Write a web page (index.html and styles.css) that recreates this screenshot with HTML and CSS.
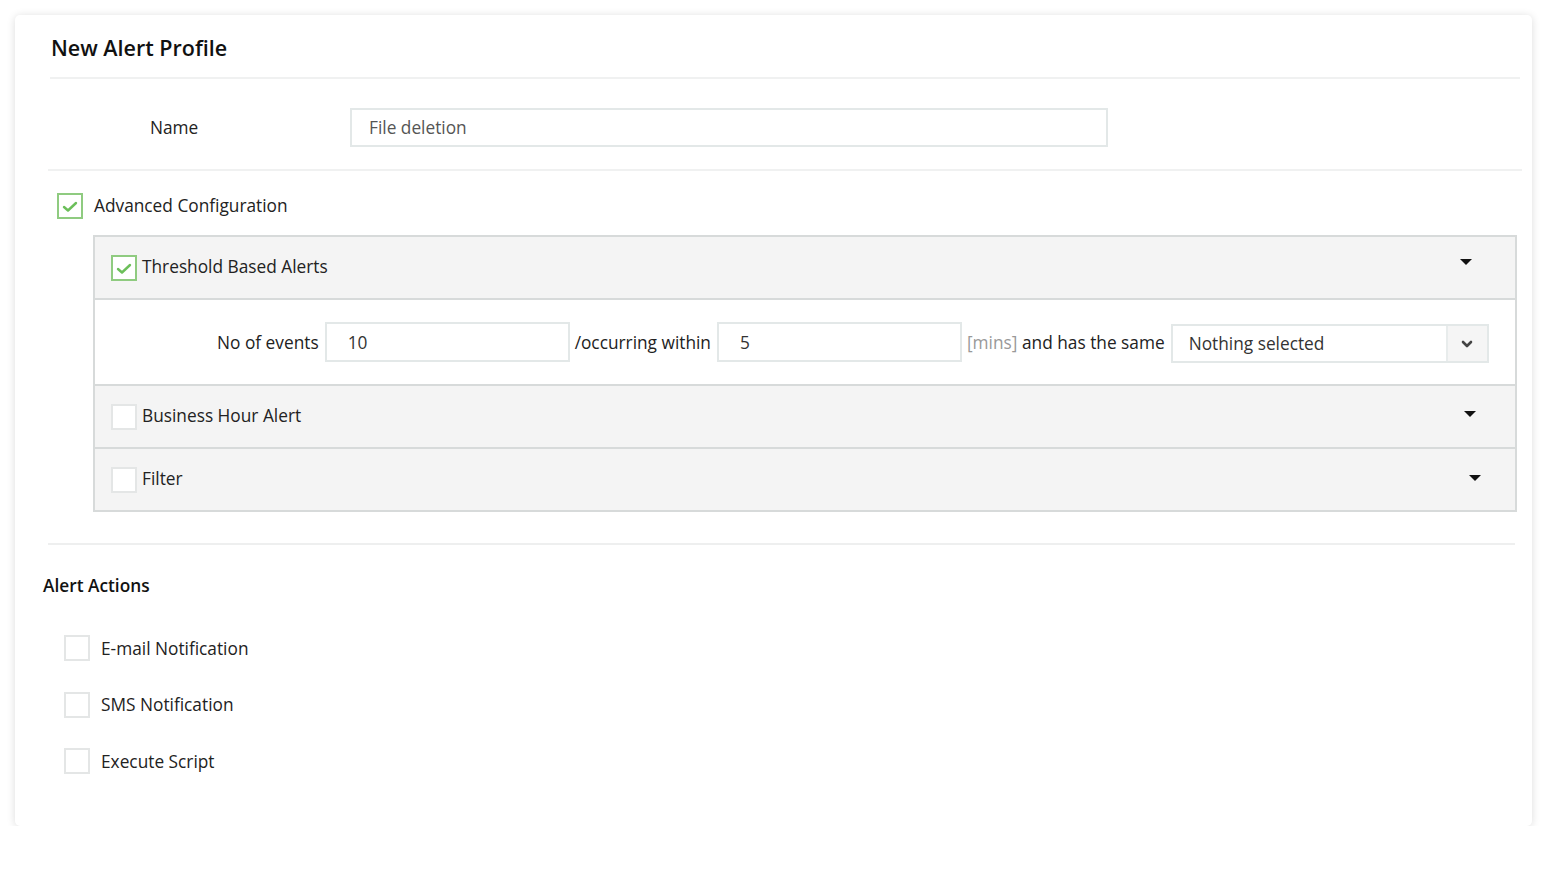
FILE: index.html
```html
<!DOCTYPE html>
<html lang="en">
<head>
<meta charset="utf-8">
<title>New Alert Profile</title>
<link rel="stylesheet" href="styles.css">
</head>
<body>
<div class="card">
  <div class="card-head">
    <h1 class="title">New Alert Profile</h1>
  </div>

  <div class="name-row">
    <label class="name-label">Name</label>
    <div class="text-input name-input">File deletion</div>
  </div>

  <div class="adv-row">
    <span class="cb cb-checked"><svg viewBox="0 0 22 22" width="22" height="22"><path d="M5 12 L9 15.5 L17 8" fill="none" stroke="#6cbf5a" stroke-width="2.4" stroke-linecap="round" stroke-linejoin="round"/></svg></span>
    <span class="adv-label">Advanced Configuration</span>
  </div>

  <div class="panel">
    <div class="panel-head">
      <span class="cb cb-checked"><svg viewBox="0 0 22 22" width="22" height="22"><path d="M5 12 L9 15.5 L17 8" fill="none" stroke="#6cbf5a" stroke-width="2.4" stroke-linecap="round" stroke-linejoin="round"/></svg></span>
      <span class="panel-title">Threshold Based Alerts</span>
      <span class="caret caret-1"></span>
    </div>
    <div class="panel-body">
      <span class="lbl">No of events</span>
      <div class="text-input small-input">10</div>
      <span class="lbl">/occurring within</span>
      <div class="text-input small-input">5</div>
      <span class="lbl"><span class="muted">[mins]</span> and has the same</span>
      <div class="select">
        <span class="select-text">Nothing selected</span>
        <span class="select-btn"><svg viewBox="0 0 14 10" width="14" height="10"><path d="M3 3 L7 7 L11 3" fill="none" stroke="#444" stroke-width="2.6" stroke-linecap="round" stroke-linejoin="round"/></svg></span>
      </div>
    </div>
    <div class="panel-head panel-head-sep">
      <span class="cb"></span>
      <span class="panel-title">Business Hour Alert</span>
      <span class="caret caret-2"></span>
    </div>
    <div class="panel-head panel-head-sep">
      <span class="cb"></span>
      <span class="panel-title">Filter</span>
      <span class="caret caret-3"></span>
    </div>
  </div>

  <div class="divider"></div>

  <h2 class="section-title">Alert Actions</h2>
  <ul class="actions">
    <li class="action"><span class="cb"></span><span class="action-label">E-mail Notification</span></li>
    <li class="action"><span class="cb"></span><span class="action-label">SMS Notification</span></li>
    <li class="action"><span class="cb"></span><span class="action-label">Execute Script</span></li>
  </ul>
</div>
</body>
</html>
```
FILE: styles.css
```css
* { box-sizing: border-box; }

html, body {
  margin: 0;
  padding: 0;
  background: #ffffff;
}

body {
  font-family: "Open Sans", "Noto Sans", "Liberation Sans", sans-serif;
  color: #222;
  font-size: 17.3px;
}

.card {
  margin: 15px 0 0 15px;
  width: 1517px;
  height: 811px;
  background: #fff;
  border-radius: 5px;
  box-shadow: 0 1px 9px rgba(0, 0, 0, 0.14);
  padding: 0 12px 0 33px;
}

.card-head {
  padding-top: 18px;
  height: 64px;
  border-bottom: 2px solid #f0f1f1;
  margin-left: 2px;
}

.title {
  margin: 0 0 0 1px;
  font-size: 21.5px;
  line-height: 30px;
  font-weight: 600;
  color: #111;
}

.name-row {
  display: flex;
  align-items: center;
  padding: 29px 0 22px;
  border-bottom: 2px solid #f0f1f1;
  margin-right: -2px;
}

.name-label {
  width: 302px;
  padding-left: 102px;
  color: #222;
}

.text-input {
  border: 2px solid #e3e8e8;
  background: #fff;
  color: #444;
  display: flex;
  align-items: center;
}

.name-input {
  width: 758px;
  height: 39px;
  padding-left: 17px;
  color: #555;
}

.adv-row {
  display: flex;
  align-items: center;
  padding: 22px 0 0 9px;
}

.adv-label {
  margin-left: 11px;
  margin-top: -2px;
}

.cb {
  width: 26px;
  height: 26px;
  border: 2px solid #e4e6e6;
  background: #fff;
  display: inline-flex;
  align-items: center;
  justify-content: center;
  flex: none;
}

.cb-checked {
  border-color: #8fcb80;
}

.panel {
  margin: 16px 3px 0 45px;
  border: 2px solid #d7dada;
  background: #f4f4f4;
}

.panel-head {
  display: flex;
  align-items: center;
  height: 61px;
  padding-left: 16px;
}

.panel-head-sep {
  border-top: 2px solid #d7dada;
  height: 63px;
}

.panel-title {
  margin-left: 5px;
  margin-top: -3px;
}

.caret {
  margin-left: auto;
  width: 0;
  height: 0;
  border-left: 6px solid transparent;
  border-right: 6px solid transparent;
  border-top: 6px solid #111;
}

.caret-1 { margin-right: 43px; margin-top: -12px; }
.caret-2 { margin-right: 39px; margin-top: -5px; }
.caret-3 { margin-right: 34px; margin-top: -4px; }

.panel-body {
  background: #fff;
  border-top: 2px solid #d7dada;
  height: 86px;
  display: flex;
  align-items: center;
  padding-left: 122px;
}

.lbl {
  margin: 0 6px 0 0;
  white-space: nowrap;
}

.small-input {
  width: 245px;
  height: 40px;
  padding-left: 21px;
  margin-right: 5px;
  color: #333;
}

.muted {
  color: #999;
}

.select {
  display: flex;
  width: 318px;
  height: 39px;
  border: 2px solid #e3e8e8;
  margin-top: 3px;
}

.select-text {
  flex: 1;
  display: flex;
  align-items: center;
  padding-left: 16px;
  color: #333;
}

.select-btn {
  width: 41px;
  background: #f5f5f5;
  border-left: 2px solid #e8ecec;
  display: flex;
  align-items: center;
  justify-content: center;
}

.divider {
  margin: 31px 5px 0 0;
  border-top: 2px solid #eeefef;
}

.section-title {
  margin: 29px 0 0 -5px;
  font-size: 17.3px;
  line-height: 24px;
  font-weight: 600;
  color: #111;
}

.actions {
  list-style: none;
  margin: 37px 0 0 16px;
  padding: 0;
  display: flex;
  flex-direction: column;
  gap: 30.5px;
}

.action {
  display: flex;
  align-items: center;
  height: 26px;
}

.action-label {
  margin-left: 11px;
}
```
